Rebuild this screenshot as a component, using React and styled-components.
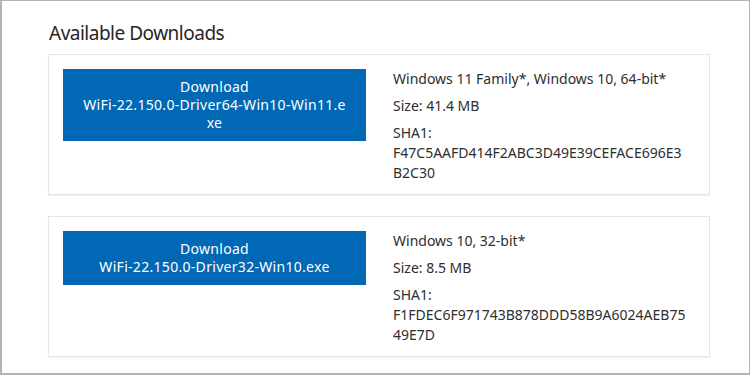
import React from "react";
import styled, { createGlobalStyle } from "styled-components";

const GlobalStyle = createGlobalStyle`
  html, body {
    margin: 0;
    padding: 0;
    background: #ffffff;
  }
  * {
    box-sizing: border-box;
  }
`;

const Frame = styled.div`
  width: 750px;
  height: 375px;
  border: 1px solid #b4b4b4;
  border-left-width: 2px;
  border-bottom-width: 2px;
  padding: 20px 39px 0 46px;
  font-family: "Noto Sans", "Open Sans", sans-serif;
  color: #2b2b2b;
  overflow: hidden;
`;

const Title = styled.h2`
  margin: 0 0 9px 1px;
  font-size: 19px;
  line-height: 24px;
  font-weight: 400;
  color: #262626;
  letter-spacing: -0.5px;
`;

const CardList = styled.div`
  display: flex;
  flex-direction: column;
  gap: 21px;
`;

const Card = styled.div`
  display: grid;
  grid-template-columns: 303px 1fr;
  column-gap: 27px;
  align-items: start;
  padding: 14px 14px 11px 14px;
  border: 1px solid #e6e6e6;
  box-shadow: 0 1px 1px rgba(0, 0, 0, 0.05);
  background: #fff;
`;

const DownloadButton = styled.a`
  display: block;
  background: #0068b5;
  color: #fff;
  text-align: center;
  text-decoration: none;
  font-size: 14px;
  line-height: 18px;
  letter-spacing: 0.3px;
  padding: 9px 19px;
  word-break: break-all;
  cursor: pointer;
`;

const Details = styled.div`
  display: flex;
  flex-direction: column;
  gap: 7px;
  max-width: 296px;
  font-size: 14px;
  line-height: 20px;
  color: #2e2e2e;
`;

const Line = styled.div`
  word-break: break-all;
`;

const downloads = [
  {
    file: "WiFi-22.150.0-Driver64-Win10-Win11.exe",
    os: "Windows 11 Family*, Windows 10, 64-bit*",
    size: "41.4 MB",
    sha: "F47C5AAFD414F2ABC3D49E39CEFACE696E3B2C30",
  },
  {
    file: "WiFi-22.150.0-Driver32-Win10.exe",
    os: "Windows 10, 32-bit*",
    size: "8.5 MB",
    sha: "F1FDEC6F971743B878DDD58B9A6024AEB7549E7D",
  },
];

export default function App() {
  return (
    <>
      <GlobalStyle />
      <Frame>
        <Title>Available Downloads</Title>
        <CardList>
          {downloads.map((d) => (
            <Card key={d.file}>
              <DownloadButton>
                Download
                <br />
                {d.file}
              </DownloadButton>
              <Details>
                <Line>{d.os}</Line>
                <Line>Size: {d.size}</Line>
                <Line>
                  SHA1:
                  <br />
                  {d.sha}
                </Line>
              </Details>
            </Card>
          ))}
        </CardList>
      </Frame>
    </>
  );
}
